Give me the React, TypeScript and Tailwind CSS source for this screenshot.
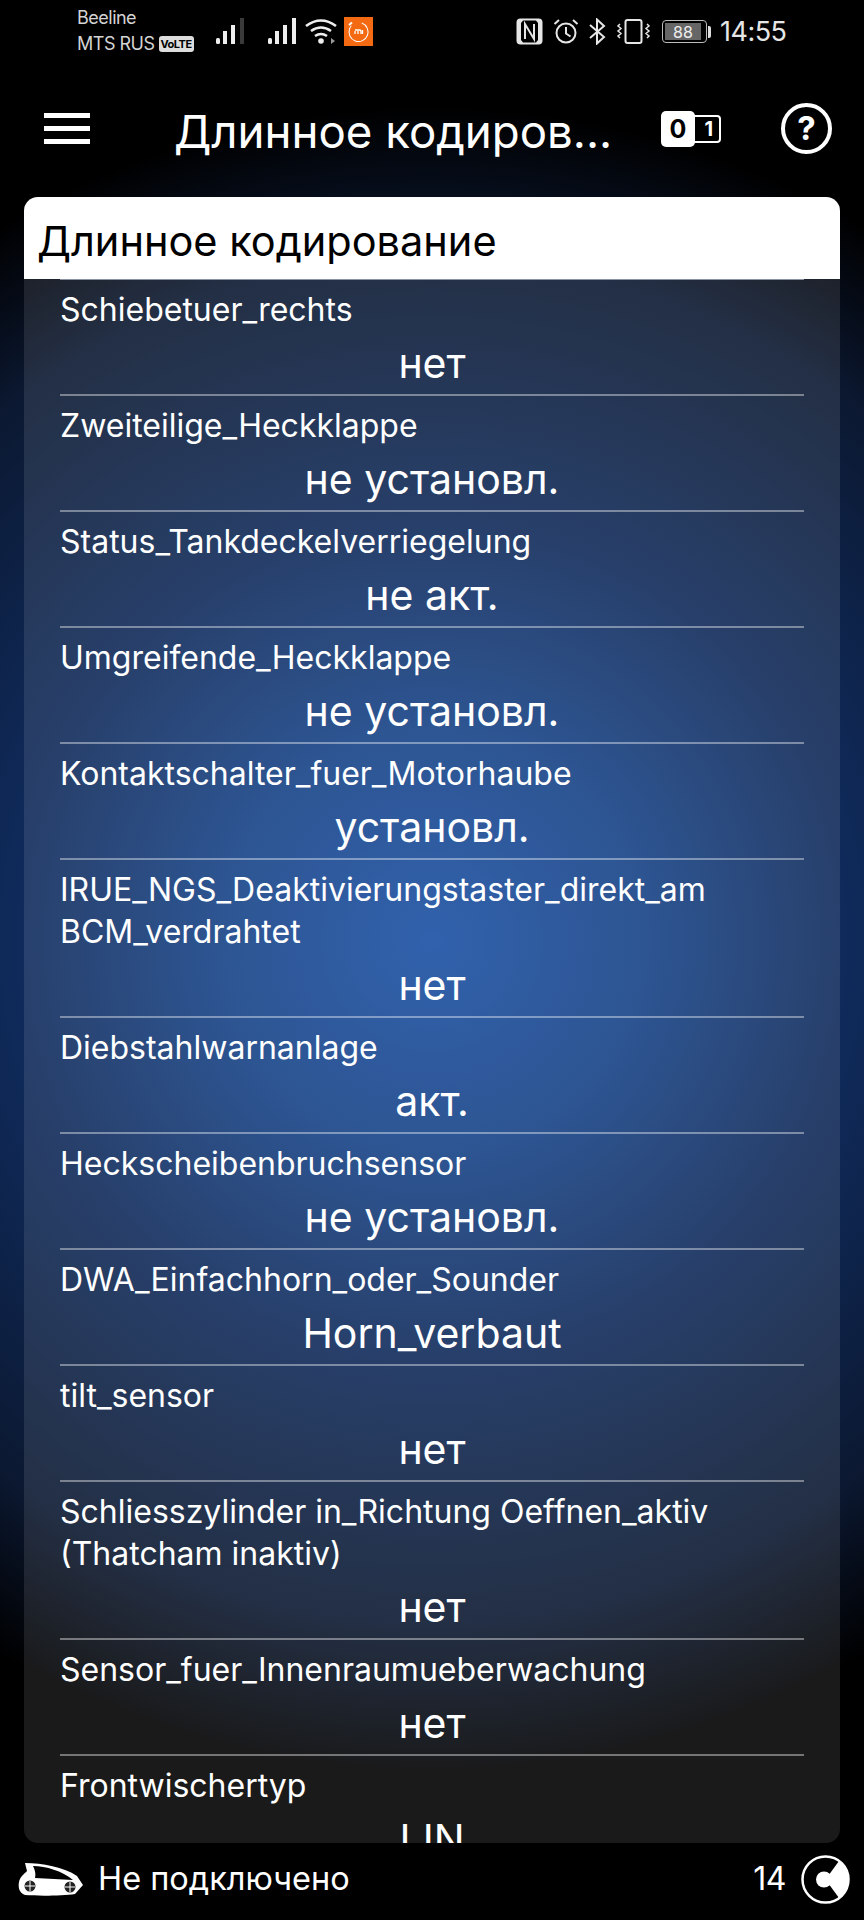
import React from 'react';

const rows = [
  { label: ['Schiebetuer_rechts'], value: 'нет' },
  { label: ['Zweiteilige_Heckklappe'], value: 'не установл.' },
  { label: ['Status_Tankdeckelverriegelung'], value: 'не акт.' },
  { label: ['Umgreifende_Heckklappe'], value: 'не установл.' },
  { label: ['Kontaktschalter_fuer_Motorhaube'], value: 'установл.' },
  { label: ['IRUE_NGS_Deaktivierungstaster_direkt_am', 'BCM_verdrahtet'], value: 'нет' },
  { label: ['Diebstahlwarnanlage'], value: 'акт.' },
  { label: ['Heckscheibenbruchsensor'], value: 'не установл.' },
  { label: ['DWA_Einfachhorn_oder_Sounder'], value: 'Horn_verbaut' },
  { label: ['tilt_sensor'], value: 'нет' },
  { label: ['Schliesszylinder in_Richtung Oeffnen_aktiv', '(Thatcham inaktiv)'], value: 'нет' },
  { label: ['Sensor_fuer_Innenraumueberwachung'], value: 'нет' },
  { label: ['Frontwischertyp'], value: 'LIN' },
];

function Signal({ dim }: { dim?: boolean }) {
  return (
    <svg width="30" height="27" viewBox="0 0 30 27">
      <rect x="0" y="20" width="4" height="6" rx="1.500" fill="#eee" />
      <rect x="7" y="13" width="4" height="13" fill="#eee" />
      <rect x="15" y="7" width="4" height="19" fill="#eee" />
      <rect x="24" y="0" width="4" height="26" fill={dim ? '#3a3a3a' : '#eee'} />
    </svg>
  );
}

function StatusBar() {
  return (
    <div className="h-[66px] flex items-start justify-between pl-[77px] pr-[78px] pt-[5px] text-[#d4d4d4]">
      <div className="flex items-start">
        <div className="w-[139px] text-[18px] leading-[26px] tracking-[-0.5px]">
          <div>Beeline</div>
          <div className="flex items-center gap-[4px]">
            MTS RUS
            <span className="bg-[#ddd] text-black rounded-[3px] px-[2px] text-[11px] leading-[16px] font-bold tracking-[-0.5px]">VoLTE</span>
          </div>
        </div>
        <div className="mt-[13px]"><Signal dim /></div>
        <div className="mt-[13px] ml-[22px]"><Signal /></div>
        <svg className="mt-[13px] ml-[7px]" width="33" height="28" viewBox="0 0 33 28" fill="none" stroke="#eee" strokeWidth="2.600">
          <path d="M1 8Q16 -3 31 8" />
          <path d="M6 13Q16 6 26 13" />
          <path d="M10 18Q16 14 22 18" />
          <circle cx="16" cy="23" r="2.800" fill="#eee" stroke="none" />
          <path d="M26 20v6l4-3z" fill="#999" stroke="none" />
        </svg>
        <div className="mt-[12px] ml-[6px] w-[29px] h-[29px] bg-[#f36a12] flex items-center justify-center">
          <svg width="25" height="25" viewBox="0 0 25 25" fill="none">
            <circle cx="12.500" cy="13" r="9.500" stroke="#fff" strokeWidth="1" strokeDasharray="48 12" transform="rotate(-70 12.500 13)" />
            <path d="M3 6l3-2.500" stroke="#fff" strokeWidth="2" />
            <path d="M9 11h4.500a1.500 1.500 0 0 1 1.500 1.500V15M12 12v3M9 12v3M16.500 11v4" stroke="#fff" strokeWidth="1.300" />
          </svg>
        </div>
      </div>
      <div className="flex items-center pt-[13px]">
        <svg width="27" height="27" viewBox="0 0 27 27">
          <rect x="0.500" y="0.500" width="26" height="26" rx="4" fill="#e6e6e6" />
          <path d="M7 2.500H20L22 5V22L20 24.500H7L5 22V5Z" fill="#000" />
          <path d="M9 21V6l9 15V6" fill="none" stroke="#e6e6e6" strokeWidth="2" />
        </svg>
        <svg className="ml-[10px]" width="26" height="27" viewBox="0 0 26 27" fill="none" stroke="#e6e6e6" strokeWidth="2">
          <circle cx="13" cy="15" r="9.500" />
          <path d="M13 9v6.500l4.500 3M1.500 6L6 2M24.500 6L20 2" />
        </svg>
        <svg className="ml-[9px]" width="18" height="27" viewBox="0 0 18 27" fill="none" stroke="#e6e6e6" strokeWidth="2">
          <path d="M2 7l14 12-7 6.500V1.500l7 6.500L2 20" />
        </svg>
        <svg className="ml-[10px]" width="35" height="27" viewBox="0 0 35 27" fill="none" stroke="#e6e6e6" strokeWidth="2">
          <rect x="9.500" y="2" width="16" height="23" rx="2" />
          <path d="M4 6l-2 2 3 2.500-3 2.500 3 2.500-3 2.500 2 2M31 6l2 2-3 2.500 3 2.500-3 2.500 3 2.500-2 2" strokeWidth="1.500" />
        </svg>
        <div className="flex items-center ml-[11px]">
          <div className="w-[45px] h-[23px] border-[1.500px] border-[#bbb] rounded-[4px] p-[2px]">
            <div className="h-full w-[36px] bg-[#666] flex items-center justify-center text-[16px] leading-none text-[#eee]">88</div>
          </div>
          <div className="w-[3px] h-[12px] bg-[#ddd] ml-[1px] rounded-r-[2px]" />
        </div>
        <span className="ml-[9px] w-[66px] text-[27px] leading-none text-[#e6e6e6] tracking-[-0.5px] whitespace-nowrap">14:55</span>
      </div>
    </div>
  );
}

function AppBar() {
  return (
    <div className="h-[131px] flex items-start pt-[38px]">
      <div className="ml-[44px] w-[46px] pt-[9px] flex flex-col gap-[8px]">
        <div className="h-[5px] bg-white" />
        <div className="h-[5px] bg-white" />
        <div className="h-[5px] bg-white" />
      </div>
      <div className="ml-[84px] w-[487px] text-[45.600px] leading-[56px] text-white whitespace-nowrap">Длинное кодиров...</div>
      <div className="relative w-[60px] h-[36px] mt-[7px]">
        <div className="absolute left-[27px] top-[4px] w-[33px] h-[28px] border-2 border-white rounded-[4px] text-white text-[20px] leading-[24px] font-bold text-right pr-[6px]">1</div>
        <div className="absolute left-0 top-0 w-[34px] h-[36px] bg-white rounded-[5px] text-black text-[25px] leading-[36px] font-bold text-center">0</div>
      </div>
      <div className="ml-[60px] -mt-[1px] w-[51px] h-[51px] border-[4px] border-white rounded-full text-white text-[33px] leading-[43px] font-bold text-center">?</div>
    </div>
  );
}

function Row({ label, value }: { label: string[]; value: string }) {
  return (
    <div className="mx-[36px] border-b-2 border-[#ffffff66] pt-[9px]">
      {label.map((line) => (
        <div key={line} className="text-[32px] leading-[42px] text-white whitespace-nowrap">{line}</div>
      ))}
      <div className="h-[63px] text-[41px] leading-[65px] text-white text-center">{value}</div>
    </div>
  );
}

function BottomBar() {
  return (
    <div className="h-[77px] flex items-center justify-between pl-[18px] pr-[14px] pb-[5px] text-white">
      <div className="flex items-center gap-[14px]">
        <svg width="66" height="33" viewBox="0 0 66 33">
          <path d="M7 0C24 0 46 4 59 13L65 22 57 31C44 33 18 33 7 32 1 30 0 24 1 19 2 14 6 11 9 8Z" fill="#fff" />
          <path d="M15 3C28 3 44 8 55 17L17 15C18 11 17 7 15 3Z" fill="#000" />
          <circle cx="12" cy="23" r="5.500" fill="#222" />
          <circle cx="52" cy="24" r="5.500" fill="#222" />
          <path d="M12 18v10M7 23h10M52 19v10M47 24h10" stroke="#fff" strokeWidth="1" />
        </svg>
        <span className="text-[32.500px] leading-none">Не подключено</span>
      </div>
      <div className="flex items-center gap-[15px]">
        <span className="text-[32px] leading-none tracking-[-0.5px]">14</span>
        <svg width="49" height="49" viewBox="0 0 49 49">
          <circle cx="24.500" cy="24.500" r="23" fill="#000" stroke="#fff" strokeWidth="2.500" />
          <path d="M24.500 24.500L38 6A23 23 0 0 1 38 43Z" fill="#fff" />
          <circle cx="23" cy="24.500" r="8" fill="#fff" />
        </svg>
      </div>
    </div>
  );
}

export default function App() {
  return (
    <div className="w-[864px] h-[1920px] flex flex-col overflow-hidden font-['Inter',sans-serif] bg-[radial-gradient(circle_at_50%_49%,#1a50a4_0%,#164286_20%,#0f2a5a_39%,#0b1830_64%,#000_78%)]">
      <StatusBar />
      <AppBar />
      <div className="mx-[24px] h-[1646px] rounded-[14px] overflow-hidden bg-[#ffffff1a] flex flex-col">
        <div className="h-[82px] shrink-0 bg-white text-black text-[41.500px] leading-[88px] pl-[13px]">Длинное кодирование</div>
        <div className="mx-[36px] h-[1px] shrink-0 bg-[#8a93a3]" />
        <div className="flex-1 overflow-hidden">
          {rows.map((r) => (
            <Row key={r.label[0]} label={r.label} value={r.value} />
          ))}
        </div>
      </div>
      <BottomBar />
    </div>
  );
}
